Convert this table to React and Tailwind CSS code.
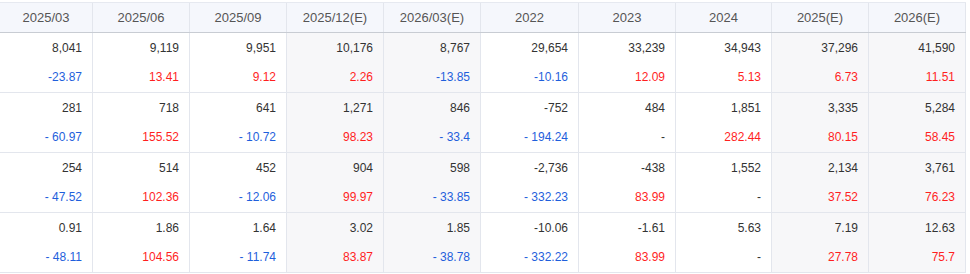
import React from "react";

const headers = ["2025/03", "2025/06", "2025/09", "2025/12(E)", "2026/03(E)", "2022", "2023", "2024", "2025(E)", "2026(E)"];
const shaded = [false, false, false, true, true, false, false, false, true, true];

const rows = [
  {
    v: ["8,041", "9,119", "9,951", "10,176", "8,767", "29,654", "33,239", "34,943", "37,296", "41,590"],
    r: [["-23.87", "b"], ["13.41", "r"], ["9.12", "r"], ["2.26", "r"], ["-13.85", "b"], ["-10.16", "b"], ["12.09", "r"], ["5.13", "r"], ["6.73", "r"], ["11.51", "r"]],
  },
  {
    v: ["281", "718", "641", "1,271", "846", "-752", "484", "1,851", "3,335", "5,284"],
    r: [["- 60.97", "b"], ["155.52", "r"], ["- 10.72", "b"], ["98.23", "r"], ["- 33.4", "b"], ["- 194.24", "b"], ["-", "d"], ["282.44", "r"], ["80.15", "r"], ["58.45", "r"]],
  },
  {
    v: ["254", "514", "452", "904", "598", "-2,736", "-438", "1,552", "2,134", "3,761"],
    r: [["- 47.52", "b"], ["102.36", "r"], ["- 12.06", "b"], ["99.97", "r"], ["- 33.85", "b"], ["- 332.23", "b"], ["83.99", "r"], ["-", "d"], ["37.52", "r"], ["76.23", "r"]],
  },
  {
    v: ["0.91", "1.86", "1.64", "3.02", "1.85", "-10.06", "-1.61", "5.63", "7.19", "12.63"],
    r: [["- 48.11", "b"], ["104.56", "r"], ["- 11.74", "b"], ["83.87", "r"], ["- 38.78", "b"], ["- 332.22", "b"], ["83.99", "r"], ["-", "d"], ["27.78", "r"], ["75.7", "r"]],
  },
];

const colorClass = { r: "text-[#ff1f1f]", b: "text-[#1f5fdc]", d: "text-[#333333]" };

const gridCols = "grid grid-cols-[93px_97px_97px_97px_97px_98px_97px_96px_97px_97px]";

export default function App() {
  return (
    <div className="w-[970px] h-[274px] bg-white pt-[2px]" style={{ fontFamily: '"Liberation Sans", Arial, sans-serif' }}>
      <div className="w-[966px]">
        <div className={`${gridCols} border-t border-b border-t-[#e6e9f0] border-b-[#c8ccd3] bg-[#f5f7fc]`}>
          {headers.map((h) => (
            <div key={h} className="h-[29px] leading-[29px] text-center text-[13px] text-[#555555] border-r border-[#e3e6ed]">
              {h}
            </div>
          ))}
        </div>
        {rows.map((row, i) => (
          <div key={i} className={`${gridCols} border-b border-[#e3e6ed]`}>
            {row.v.map((val, j) => (
              <div
                key={j}
                className={`h-[59px] pt-[1px] pr-[10px] text-right text-[12px] border-r border-[#e3e6ed] ${shaded[j] ? "bg-[#f7f7f9]" : "bg-white"}`}
              >
                <div className="h-[29px] leading-[29px] text-[#333333]">{val}</div>
                <div className={`h-[29px] leading-[29px] ${colorClass[row.r[j][1]]}`}>{row.r[j][0]}</div>
              </div>
            ))}
          </div>
        ))}
      </div>
    </div>
  );
}
